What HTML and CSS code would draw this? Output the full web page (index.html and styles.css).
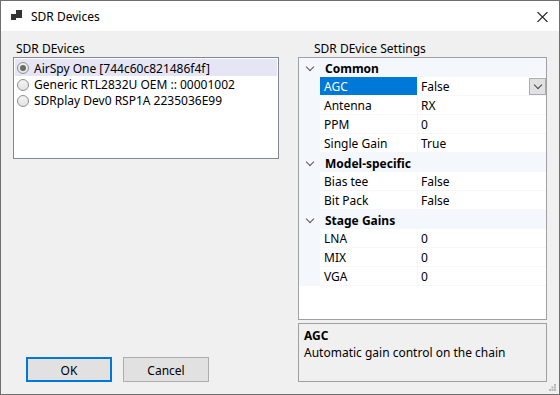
FILE: index.html
```html
<!DOCTYPE html>
<html>
<head>
<meta charset="utf-8">
<link rel="stylesheet" href="styles.css">
</head>
<body>
<div class="window">
  <div class="titlebar">
    <svg class="appicon" width="12" height="11" viewBox="0 0 12 11">
      <rect x="0" y="4" width="5" height="6" fill="#333"/>
      <rect x="5" y="0" width="6" height="8" fill="#333"/>
    </svg>
    <span class="title">SDR Devices</span>
    <svg class="close" width="11" height="10" viewBox="0 0 11 10">
      <path d="M0.5 0 L10.5 10 M10.5 0 L0.5 10" stroke="#222" stroke-width="1.1"/>
    </svg>
  </div>
  <div class="content">
    <div class="leftcol">
      <div class="label">SDR DEvices</div>
      <div class="listbox">
        <div class="item selected"><span class="radio checked"></span><span class="itext">AirSpy One [744c60c821486f4f]</span></div>
        <div class="item"><span class="radio"></span><span class="itext">Generic RTL2832U OEM :: 00001002</span></div>
        <div class="item"><span class="radio"></span><span class="itext">SDRplay Dev0 RSP1A 2235036E99</span></div>
      </div>
      <div class="buttons">
        <div class="btn default">OK</div>
        <div class="btn">Cancel</div>
      </div>
    </div>
    <div class="rightcol">
      <div class="label rlabel">SDR DEvice Settings</div>
      <div class="grid">
        <div class="cat"><span class="chev"></span><span class="ctext">Common</span></div>
        <div class="row sel"><div class="name">AGC</div><div class="val">False<span class="dd"><span class="ddchev"></span></span></div></div>
        <div class="row"><div class="name">Antenna</div><div class="val">RX</div></div>
        <div class="row"><div class="name">PPM</div><div class="val">0</div></div>
        <div class="row"><div class="name">Single Gain</div><div class="val">True</div></div>
        <div class="cat"><span class="chev"></span><span class="ctext">Model-specific</span></div>
        <div class="row"><div class="name">Bias tee</div><div class="val">False</div></div>
        <div class="row"><div class="name">Bit Pack</div><div class="val">False</div></div>
        <div class="cat"><span class="chev"></span><span class="ctext">Stage Gains</span></div>
        <div class="row"><div class="name">LNA</div><div class="val">0</div></div>
        <div class="row"><div class="name">MIX</div><div class="val">0</div></div>
        <div class="row"><div class="name">VGA</div><div class="val">0</div></div>
      </div>
      <div class="desc">
        <div class="dtitle">AGC</div>
        <div class="dtext">Automatic gain control on the chain</div>
      </div>
    </div>
  </div>
  <svg class="grip" width="7" height="7" viewBox="0 0 7 7">
    <rect x="5" y="0" width="2" height="2" fill="#b8b8b8"/>
    <rect x="2.5" y="2.5" width="2" height="2" fill="#b8b8b8"/>
    <rect x="5" y="2.5" width="2" height="2" fill="#b8b8b8"/>
    <rect x="0" y="5" width="2" height="2" fill="#b8b8b8"/>
    <rect x="2.5" y="5" width="2" height="2" fill="#b8b8b8"/>
    <rect x="5" y="5" width="2" height="2" fill="#b8b8b8"/>
  </svg>
</div>
</body>
</html>
```
FILE: styles.css
```css
html, body {
  margin: 0;
  padding: 0;
  background: #3a4048;
}
body {
  font-family: "Noto Sans", "Liberation Sans", sans-serif;
  font-size: 12px;
  color: #000;
}
.window {
  position: relative;
  width: 558px;
  height: 393px;
  border: 1px solid #6f6f6f;
  background: #f0f0f0;
  display: flex;
  flex-direction: column;
}
.titlebar {
  height: 30px;
  background: #fff;
  display: flex;
  align-items: center;
  padding-left: 10px;
}
.appicon {
  margin-top: -1px;
}
.title {
  margin-left: 8px;
  margin-top: 2px;
  font-size: 12px;
  line-height: 16px;
  flex: 1;
}
.close {
  margin-right: 11px;
  margin-top: 1px;
}
.content {
  flex: 1;
  display: flex;
  padding: 9px 11px 12px 12px;
  gap: 19px;
}
.leftcol {
  width: 266px;
  display: flex;
  flex-direction: column;
}
.label {
  height: 17px;
  line-height: 16px;
  padding-top: 1px;
  box-sizing: border-box;
  padding-left: 3px;
}
.rlabel {
  padding-left: 16px;
}
.listbox {
  height: 99px;
  border: 1px solid #828790;
  background: #fff;
  padding: 1px 1px 0 1px;
}
.item {
  height: 16px;
  display: flex;
  align-items: center;
  padding-left: 2px;
  white-space: nowrap;
}
.item.selected {
  background: #e5e5f5;
  height: 17px;
}
.itext {
  line-height: 16px;
  padding-top: 2px;
}
.radio {
  border: 1px solid #8f8f8f;
  border-radius: 50%;
  background: linear-gradient(#f2f2f2, #e3e3e3);
  box-sizing: border-box;
  width: 12px;
  height: 12px;
  margin-top: 1px;
  margin-right: 5px;
  position: relative;
  flex: none;
}
.radio.checked::after {
  content: "";
  position: absolute;
  left: 2px;
  top: 2px;
  width: 6px;
  height: 6px;
  border-radius: 50%;
  background: #6a6a6a;
}
.buttons {
  margin-top: auto;
  display: flex;
  gap: 11px;
  padding-left: 13px;
}
.btn {
  width: 86px;
  height: 25px;
  box-sizing: border-box;
  border: 1px solid #adadad;
  background: #e1e1e1;
  display: flex;
  align-items: center;
  justify-content: center;
  padding-top: 1px;
}
.btn.default {
  border: 2px solid #0078d7;
}
.rightcol {
  width: 249px;
  display: flex;
  flex-direction: column;
}
.grid {
  height: 261px;
  border: 1px solid #a0a0a0;
  background: #fff;
  display: flex;
  flex-direction: column;
}
.cat, .row {
  height: 19px;
  flex: none;
  box-sizing: border-box;
}
.cat {
  background: #f4f7fc;
  font-weight: bold;
  display: flex;
  align-items: center;
  padding-left: 7px;
}
.ctext {
  line-height: 16px;
  padding-top: 2px;
}
.chev {
  width: 5px;
  height: 5px;
  border-right: 1.3px solid #555;
  border-bottom: 1.3px solid #555;
  transform: rotate(45deg);
  margin-top: -2px;
  margin-right: 12px;
  margin-left: 1px;
}
.row {
  display: flex;
  border-left: 21px solid #f4f7fc;
  border-bottom: 1px solid #f4f7fc;
}
.name {
  width: 93px;
  padding-left: 4px;
  padding-top: 2px;
  line-height: 16px;
  border-right: 1px solid #f4f7fc;
  white-space: nowrap;
}
.row.sel .name {
  background: #0078d7;
  color: #fff;
}
.val {
  flex: 1;
  padding-left: 3px;
  padding-top: 2px;
  line-height: 16px;
  position: relative;
}
.dd {
  position: absolute;
  right: 0;
  top: 1px;
  width: 17px;
  height: 17px;
  box-sizing: border-box;
  border: 1px solid #adadad;
  background: #e1e1e1;
  display: flex;
  justify-content: center;
}
.ddchev {
  width: 5px;
  height: 5px;
  border-right: 1px solid #444;
  border-bottom: 1px solid #444;
  transform: rotate(45deg);
  margin-top: 3px;
}
.desc {
  margin-top: 3px;
  height: 59px;
  border: 1px solid #a0a0a0;
  background: #f0f0f0;
  padding: 4px 5px;
  box-sizing: border-box;
}
.dtitle {
  font-weight: bold;
  line-height: 16px;
}
.dtext {
  line-height: 16px;
  margin-top: 1px;
}
.grip {
  position: absolute;
  right: 3px;
  bottom: 3px;
}
```
